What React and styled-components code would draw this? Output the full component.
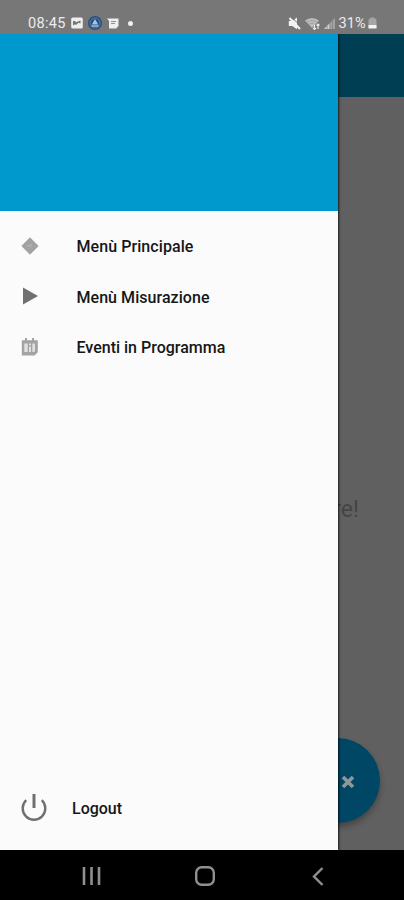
import React from 'react';
import styled, { createGlobalStyle } from 'styled-components';

const GlobalStyle = createGlobalStyle`
    * {
        box-sizing: border-box;
    }
    body {
        margin: 0;
        font-family: Roboto, sans-serif;
    }
    svg {
        display: block;
        flex-shrink: 0;
    }
`;

const Phone = styled.div`
    display: flex;
    flex-direction: column;
    width: 404px;
    height: 900px;
    overflow: hidden;
    background-color: #000;
`;

const StatusBar = styled.header`
    display: flex;
    justify-content: space-between;
    height: 34px;
    padding: 12px 27px 0 28px;
    background-color: #777;
    color: #ececec;
    font-size: 14.5px;
    line-height: 22px;
`;

const StatusGroup = styled.div`
    display: flex;
    align-items: center;
    gap: ${props => props.$gap}px;
    height: 22px;
`;

const StatusText = styled.span`
    width: ${props => props.$width}px;
    padding-top: 2px;
    white-space: nowrap;
    letter-spacing: ${props => props.$spacing || 0}px;
`;

const Screen = styled.div`
    position: relative;
    display: flex;
    height: 816px;
    background-color: #606060;
`;

const Page = styled.main`
    display: flex;
    flex-direction: column;
    width: 100%;
    align-items: flex-end;
`;

const AppBar = styled.div`
    width: 100%;
    height: 63px;
    background-color: #003e53;
`;

const PageMessage = styled.p`
    margin: 398px 45px 0 0;
    color: #454545;
    font-size: 23px;
    line-height: 30px;
`;

const Fab = styled.div`
    display: flex;
    align-items: center;
    justify-content: center;
    width: 85px;
    height: 85px;
    margin: 213px 24.5px 0 0;
    padding: 2px 0 0 21px;
    border-radius: 50%;
    background-color: #004665;
    box-shadow: 0 4px 6px rgba(0, 0, 0, 0.3);
`;

const Drawer = styled.aside`
    position: absolute;
    top: 0;
    left: 0;
    display: flex;
    flex-direction: column;
    width: 338px;
    height: 100%;
    background-color: #fbfbfb;
    box-shadow: 1px 0 2px rgba(0, 0, 0, 0.75);
    clip-path: inset(0 -6px 0 0);
`;

const DrawerHeader = styled.div`
    height: 177px;
    background-color: #0099cd;
`;

const Menu = styled.nav`
    display: flex;
    flex: 1;
    flex-direction: column;
    padding-top: 9.5px;
`;

const MenuItem = styled.a`
    display: flex;
    align-items: center;
    gap: ${props => props.$gap || 37.5}px;
    height: ${props => props.$height || 50.6}px;
    padding-left: 21px;
    color: #161616;
    font-size: 16px;
    font-weight: 500;
    letter-spacing: ${props => props.$spacing || 0}px;
`;

const MenuLabel = styled.span`
    padding-top: 2px;
`;

const LogoutRow = styled.div`
    height: 67px;
`;

const NavBar = styled.footer`
    display: flex;
    justify-content: space-between;
    align-items: center;
    height: 50px;
    padding: 2px 80px 0 82px;
`;

const PictureIcon = () => (
    <svg width="12" height="12" viewBox="0 0 12 12">
        <rect x="0.2" y="0.5" width="11.6" height="11" rx="1.5" fill="#eee" />
        <path d="M2 4h2l1 1.2L9.5 3.5v3L7.5 5.8 5 8 4 7.2 2 8.5" fill="#777" />
    </svg>
);

const BadgeIcon = () => (
    <svg width="14" height="14" viewBox="0 0 14 14">
        <circle cx="7" cy="7" r="7" fill="#255083" />
        <circle cx="7" cy="7" r="5" fill="none" stroke="#6289b1" strokeWidth="0.8" />
        <path d="M3.8 8.5L7 3l3.2 5.5z" fill="#a9c1dc" />
        <path d="M3.5 10h7" stroke="#cad7e8" strokeWidth="1.2" />
    </svg>
);

const MessageIcon = () => (
    <svg width="12" height="11" viewBox="0 0 12 11">
        <path d="M0 .5h11.5v7.5L9 10.5H2V3z" fill="#eee" />
        <path d="M4 3.5h5M4 5.5h4" stroke="#777" strokeWidth="0.8" />
    </svg>
);

const MuteIcon = () => (
    <svg width="13" height="13" viewBox="0 0 13 13">
        <path d="M.8 4h3.4L9 .5v11.8L4.2 9H.8z" fill="#f2f2f2" />
        <path d="M4 .5l9 9" stroke="#777" strokeWidth="1" />
        <path d="M1.5 1l10.5 11" stroke="#f2f2f2" strokeWidth="2" />
    </svg>
);

const WifiIcon = () => (
    <svg width="16" height="13" viewBox="0 0 16 13">
        <path d="M0 3.5Q7 -1.5 14 3.5L7 11z" fill="#bcbcbc" />
        <path d="M2 5q5-3 10 0M4 7.2q3-1.7 6 0" fill="none" stroke="#989898" strokeWidth="0.7" />
        <path d="M9.5 7.5v5M8 11l1.5 1.5L11 11M13 12V7M11.5 8.5L13 7l1.5 1.5" fill="none" stroke="#e8e8e8" strokeWidth="1.2" />
    </svg>
);

const SignalIcon = () => (
    <svg width="11" height="11" viewBox="0 0 11 11">
        <path d="M0 11L11 0v11z" fill="#a2a2a2" />
        <path d="M0 11l5.5-5.5V11z" fill="#d0d0d0" />
        <path d="M3 11V6M6 11V4M8.5 11V1" stroke="#868686" strokeWidth="0.8" />
    </svg>
);

const BatteryIcon = () => (
    <svg width="9" height="12" viewBox="0 0 9 12">
        <path d="M.5 11V3Q.5 1.5 2.5 1.5V.5h4v1q2 0 2 1.5v8z" fill="#a6a6a6" />
        <path d="M.5 8h8v3.5h-8z" fill="#f4f4f4" />
    </svg>
);

const DiamondIcon = () => (
    <svg width="18" height="18" viewBox="0 0 18 18">
        <path d="M9 .8L17.2 9 9 17.2.8 9z" fill="#a2a2a2" stroke="#a2a2a2" strokeLinejoin="round" />
        <path d="M6.5 10V8.5h4M9 6.8l2 1.7-2 1.7" fill="none" stroke="#b3b3b3" strokeWidth="1" />
    </svg>
);

const PlayIcon = () => (
    <svg width="18" height="18" viewBox="0 0 18 18">
        <path d="M2 .5l15 8.5-15 8.5z" fill="#707070" />
    </svg>
);

const CalendarIcon = () => (
    <svg width="18" height="18" viewBox="0 0 18 18">
        <path d="M.8 2.2H4V0h2v2.2h5V0h2v2.2h3.8v12L13.5 17.5H.8z" fill="#a3a3a3" />
        <path d="M3.3 5.5h3.4v8.5H3.3zM8 5.5h2v1.8H8zM8 8.5h2v5.5H8zM11.3 5.5h2.7v7.5l-1 1h-1.7z" fill="#e0e0e0" />
    </svg>
);

const PowerIcon = () => (
    <svg width="26" height="28" viewBox="0 0 26 28" fill="none" stroke="#707070" strokeWidth="2.4">
        <path d="M13 0v14" strokeWidth="3" />
        <path d="M5.2 6.2a11.3 11.3 0 1 0 15.6 0" />
    </svg>
);

const CrossIcon = () => (
    <svg width="14" height="14" viewBox="0 0 14 14">
        <path d="M2 2l10 10M12 2L2 12" stroke="#8f979a" strokeWidth="3.6" />
    </svg>
);

const RecentsIcon = () => (
    <svg width="19" height="18" viewBox="0 0 19 18">
        <path d="M2 0v18M9.5 0v18M17 0v18" stroke="#909090" strokeWidth="2.6" />
    </svg>
);

const HomeIcon = () => (
    <svg width="24" height="20" viewBox="0 0 24 20">
        <rect x="1.2" y="1.2" width="17.6" height="17.6" rx="5.5" fill="none" stroke="#909090" strokeWidth="2.4" />
    </svg>
);

const BackIcon = () => (
    <svg width="12" height="19" viewBox="0 0 12 19">
        <path d="M10.5 1L2 9.5l8.5 8.5" fill="none" stroke="#909090" strokeWidth="2.4" />
    </svg>
);

const Dot = styled.span`
    width: 5px;
    height: 5px;
    margin-left: 4px;
    border-radius: 50%;
    background-color: #f0f0f0;
`;

const menuItems = [
    { label: 'Menù Principale', icon: <DiamondIcon />, spacing: 0.07 },
    { label: 'Menù Misurazione', icon: <PlayIcon />, spacing: 0.05 },
    { label: 'Eventi in Programma', icon: <CalendarIcon /> },
];

const App = () => {
    return (
        <Phone>
            <GlobalStyle />
            <StatusBar>
                <StatusGroup $gap={5}>
                    <StatusText $width={38} $spacing={0.3}>08:45</StatusText>
                    <PictureIcon />
                    <BadgeIcon />
                    <MessageIcon />
                    <Dot />
                </StatusGroup>
                <StatusGroup $gap={3.5}>
                    <MuteIcon />
                    <WifiIcon />
                    <SignalIcon />
                    <StatusText $width={26} $spacing={0.1}>31%</StatusText>
                    <BatteryIcon />
                </StatusGroup>
            </StatusBar>
            <Screen>
                <Page>
                    <AppBar />
                    <PageMessage>re!</PageMessage>
                    <Fab>
                        <CrossIcon />
                    </Fab>
                </Page>
                <Drawer>
                    <DrawerHeader />
                    <Menu>
                        {menuItems.map(item => (
                            <MenuItem key={item.label} $spacing={item.spacing}>
                                {item.icon}
                                <MenuLabel>{item.label}</MenuLabel>
                            </MenuItem>
                        ))}
                    </Menu>
                    <LogoutRow>
                        <MenuItem $gap={25} $height={50}>
                            <PowerIcon />
                            Logout
                        </MenuItem>
                    </LogoutRow>
                </Drawer>
            </Screen>
            <NavBar>
                <RecentsIcon />
                <HomeIcon />
                <BackIcon />
            </NavBar>
        </Phone>
    );
};

export default App;
